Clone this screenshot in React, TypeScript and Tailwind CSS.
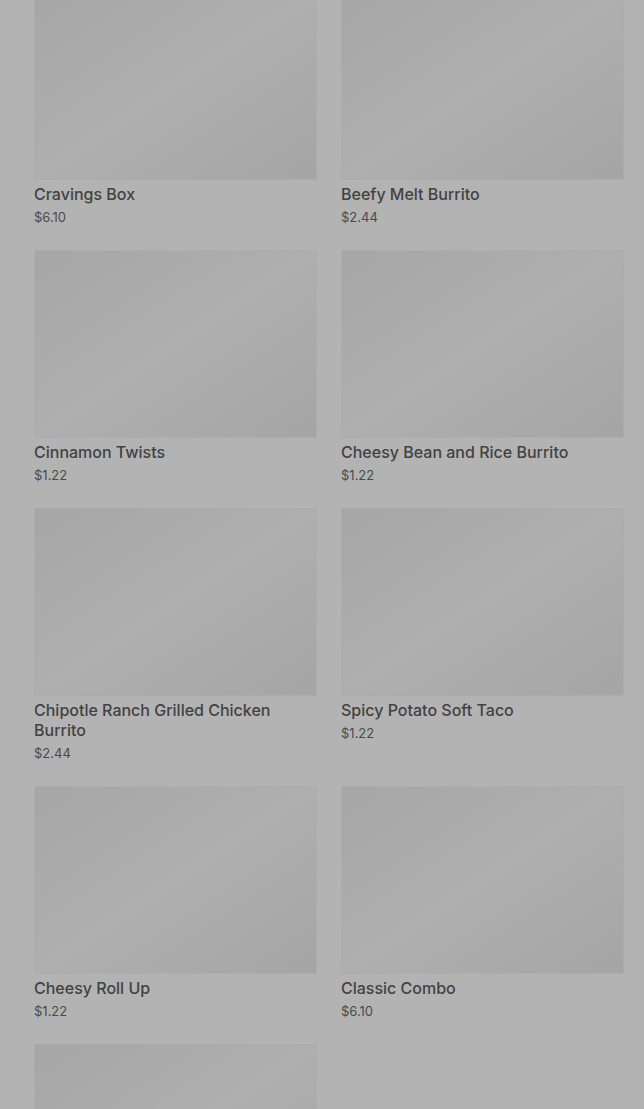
import React from "react";

const items = [
  { name: "Cravings Box", price: "$6.10" },
  { name: "Beefy Melt Burrito", price: "$2.44" },
  { name: "Cinnamon Twists", price: "$1.22" },
  { name: "Cheesy Bean and Rice Burrito", price: "$1.22" },
  { name: "Chipotle Ranch Grilled Chicken Burrito", price: "$2.44" },
  { name: "Spicy Potato Soft Taco", price: "$1.22" },
  { name: "Cheesy Roll Up", price: "$1.22" },
  { name: "Classic Combo", price: "$6.10" },
];

function Img() {
  return (
    <div className="h-[188px] w-full border border-[#acacac] bg-linear-to-br from-[#a6a6a6] via-[#afafaf] to-[#a5a5a5]" />
  );
}

export default function App() {
  return (
    <div
      className="h-[1109px] w-full overflow-hidden bg-[#b3b3b3]"
      style={{ fontFamily: "Inter, Roboto, sans-serif" }}
    >
      <div className="mt-[-8px] grid grid-cols-[283px_283px] gap-x-6 gap-y-6 pl-[34px] pr-[20px]">
        {items.map((it) => (
          <div key={it.name} className="flex flex-col">
            <Img />
            <div className="mt-1 text-[16px] font-medium leading-[20px] text-[#424242]">
              {it.name}
            </div>
            <div className="mt-1 text-[13px] leading-[18px] text-[#4a4a4a]">
              {it.price}
            </div>
          </div>
        ))}
        <div className="flex flex-col">
          <Img />
        </div>
      </div>
    </div>
  );
}
